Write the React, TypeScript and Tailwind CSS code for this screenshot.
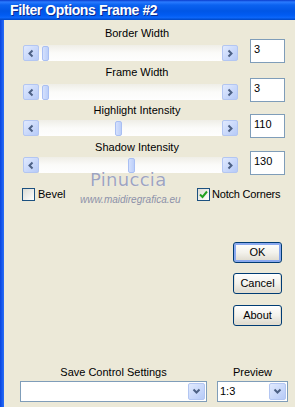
import React from 'react';

const rows = [
  { label: 'Border Width', value: '3', thumb: 'ml-[3px]', labelMt: 'mt-[7px]', barMt: 'mt-[5px]' },
  { label: 'Frame Width', value: '3', thumb: 'ml-[3px]', labelMt: 'mt-[5px]', barMt: 'mt-[5px]' },
  { label: 'Highlight Intensity', value: '110', thumb: 'ml-[76px]', labelMt: 'mt-[4px]', barMt: 'mt-[3px]' },
  { label: 'Shadow Intensity', value: '130', thumb: 'ml-[89px]', labelMt: 'mt-[5px]', barMt: 'mt-[3px]' }
];

const Chevron: React.FC<{ dir: 'left' | 'right' | 'down' }> = ({ dir }) => {
  const d =
    dir === 'left' ? 'M5.5 1.5 L2.5 4.5 L5.5 7.5' : dir === 'right' ? 'M2.5 1.5 L5.5 4.5 L2.5 7.5' : 'M1.5 2.5 L4.5 5.5 L7.5 2.5';
  return (
    <svg width="9" height="9" viewBox="0 0 9 9">
      <path d={d} fill="none" stroke="#4d6185" strokeWidth="2" />
    </svg>
  );
};

const ArrowButton: React.FC<{ dir: 'left' | 'right' }> = ({ dir }) => (
  <div className="w-[16px] h-[16px] flex items-center justify-center rounded-[2px] border border-[#b3c6f2] bg-gradient-to-br from-[#e1eafe] to-[#b6caf7]">
    <Chevron dir={dir} />
  </div>
);

const Scrollbar: React.FC<{ thumb: string }> = ({ thumb }) => (
  <div className="flex w-[215px] h-[16px]">
    <ArrowButton dir="left" />
    <div className="flex-1 flex items-center bg-gradient-to-b from-[#efeee7] via-[#fbfbf9] to-[#fefefe]">
      <div className={`${thumb} w-[7px] h-[15px] rounded-[2px] border border-[#a9bff3] bg-gradient-to-r from-[#d4e0fd] to-[#bccff9]`} />
    </div>
    <ArrowButton dir="right" />
  </div>
);

const Checkbox: React.FC<{ checked?: boolean }> = ({ checked }) => (
  <div className="w-[13px] h-[13px] border border-[#1c5180] bg-gradient-to-br from-[#dcdcd5] to-white flex items-center justify-center">
    {checked && (
      <svg width="9" height="9" viewBox="0 0 9 9">
        <path d="M1 4.5 L3.5 7 L8 1.5" fill="none" stroke="#21a121" strokeWidth="2" />
      </svg>
    )}
  </div>
);

const XPButton: React.FC<{ label: string; isDefault?: boolean; className?: string }> = ({ label, isDefault, className }) => (
  <div
    className={`${className ?? ''} w-[49px] h-[21px] rounded-[3px] border border-[#003c74] bg-gradient-to-b from-white via-[#f3f2ec] to-[#dcd8cc] flex items-center justify-center text-[11px] text-black ${
      isDefault ? 'shadow-[inset_0_0_0_2px_#8aa9ef]' : 'shadow-[inset_0_-1px_0_1px_#e3ded1]'
    }`}>
    {label}
  </div>
);

const Combo: React.FC<{ value?: string; width: string }> = ({ value, width }) => (
  <div className={`${width} h-[21px] border border-[#7f9db9] bg-white flex`}>
    <div className="flex-1 pl-[2px] pt-[3px] text-[11px] leading-[13px] text-black">{value}</div>
    <div className="w-[17px] m-[1px] flex items-center justify-center rounded-[2px] border border-[#b3c6f2] bg-gradient-to-br from-[#e1eafe] to-[#b6caf7]">
      <Chevron dir="down" />
    </div>
  </div>
);

const App: React.FC = () => {
  return (
    <div className="w-[295px] h-[407px] bg-[#ece9d8] flex flex-col overflow-hidden font-['Liberation_Sans',Arial,sans-serif]">
      {/* Title bar */}
      <div className="h-[20px] flex items-center pl-[10px] bg-[linear-gradient(180deg,#0a3ccc_0%,#2a7bff_10%,#0b62f0_25%,#0056e6_55%,#005bf2_75%,#0b66fa_88%,#0047c4_100%)]">
        <span className="text-white font-bold text-[14px] tracking-[-0.4px] leading-none [text-shadow:1px_1px_0_#0b2a8f]">
          Filter Options Frame #2
        </span>
      </div>

      <div className="flex flex-1">
        <div className="w-[4px] bg-gradient-to-r from-[#0a44de] via-[#1659ee] to-[#2a6ef5]" />
        <div className="relative flex-1 flex flex-col pl-[19px] text-[11px] text-black">
          {rows.map((r) => (
            <div key={r.label} className={r.labelMt}>
              <div className="w-[228px] h-[13px] leading-[13px] text-center">{r.label}</div>
              <div className={`${r.barMt} flex items-start h-[16px]`}>
                <Scrollbar thumb={r.thumb} />
                <div className="ml-[12px] -mt-[6px] w-[35px] h-[24px] border border-[#7f9db9] bg-white px-[3px] pt-[3px] leading-[13px]">
                  {r.value}
                </div>
              </div>
            </div>
          ))}

          {/* Checkboxes */}
          <div className="mt-[15px] -ml-[1px] flex h-[13px] items-center">
            <div className="w-[175px] flex items-center">
              <Checkbox />
              <span className="ml-[3px] leading-[13px]">Bevel</span>
            </div>
            <div className="flex items-center">
              <Checkbox checked />
              <span className="ml-[2px] leading-[13px] tracking-[-0.2px]">Notch Corners</span>
            </div>
          </div>

          {/* Buttons */}
          <div className="ml-[210px] flex flex-col">
            <XPButton label="OK" isDefault className="mt-[41px]" />
            <XPButton label="Cancel" className="mt-[10px]" />
            <XPButton label="About" className="mt-[11px]" />
          </div>

          {/* Bottom controls */}
          <div className="mt-[40px] -ml-[3px] flex">
            <div className="flex flex-col w-[187px]">
              <div className="h-[13px] leading-[13px] text-center">Save Control Settings</div>
              <div className="mt-[2px]">
                <Combo width="w-[187px]" />
              </div>
            </div>
            <div className="ml-[10px] flex flex-col w-[71px]">
              <div className="h-[13px] leading-[13px] text-center">Preview</div>
              <div className="mt-[2px]">
                <Combo value="1:3" width="w-[71px]" />
              </div>
            </div>
          </div>

          {/* Watermark */}
          <div className="absolute left-[86px] top-[151px] font-['DejaVu_Sans',sans-serif] text-[18px] leading-none text-[#9ea4bf] tracking-[0.3px] [text-shadow:0_0_1px_#ffffff] pointer-events-none">
            Pinuccia
          </div>
          <div className="absolute left-[76px] top-[175px] text-[10px] leading-none italic text-[#8c91a9] pointer-events-none">
            www.maidiregrafica.eu
          </div>
        </div>
      </div>
    </div>
  );
};

export default App;
